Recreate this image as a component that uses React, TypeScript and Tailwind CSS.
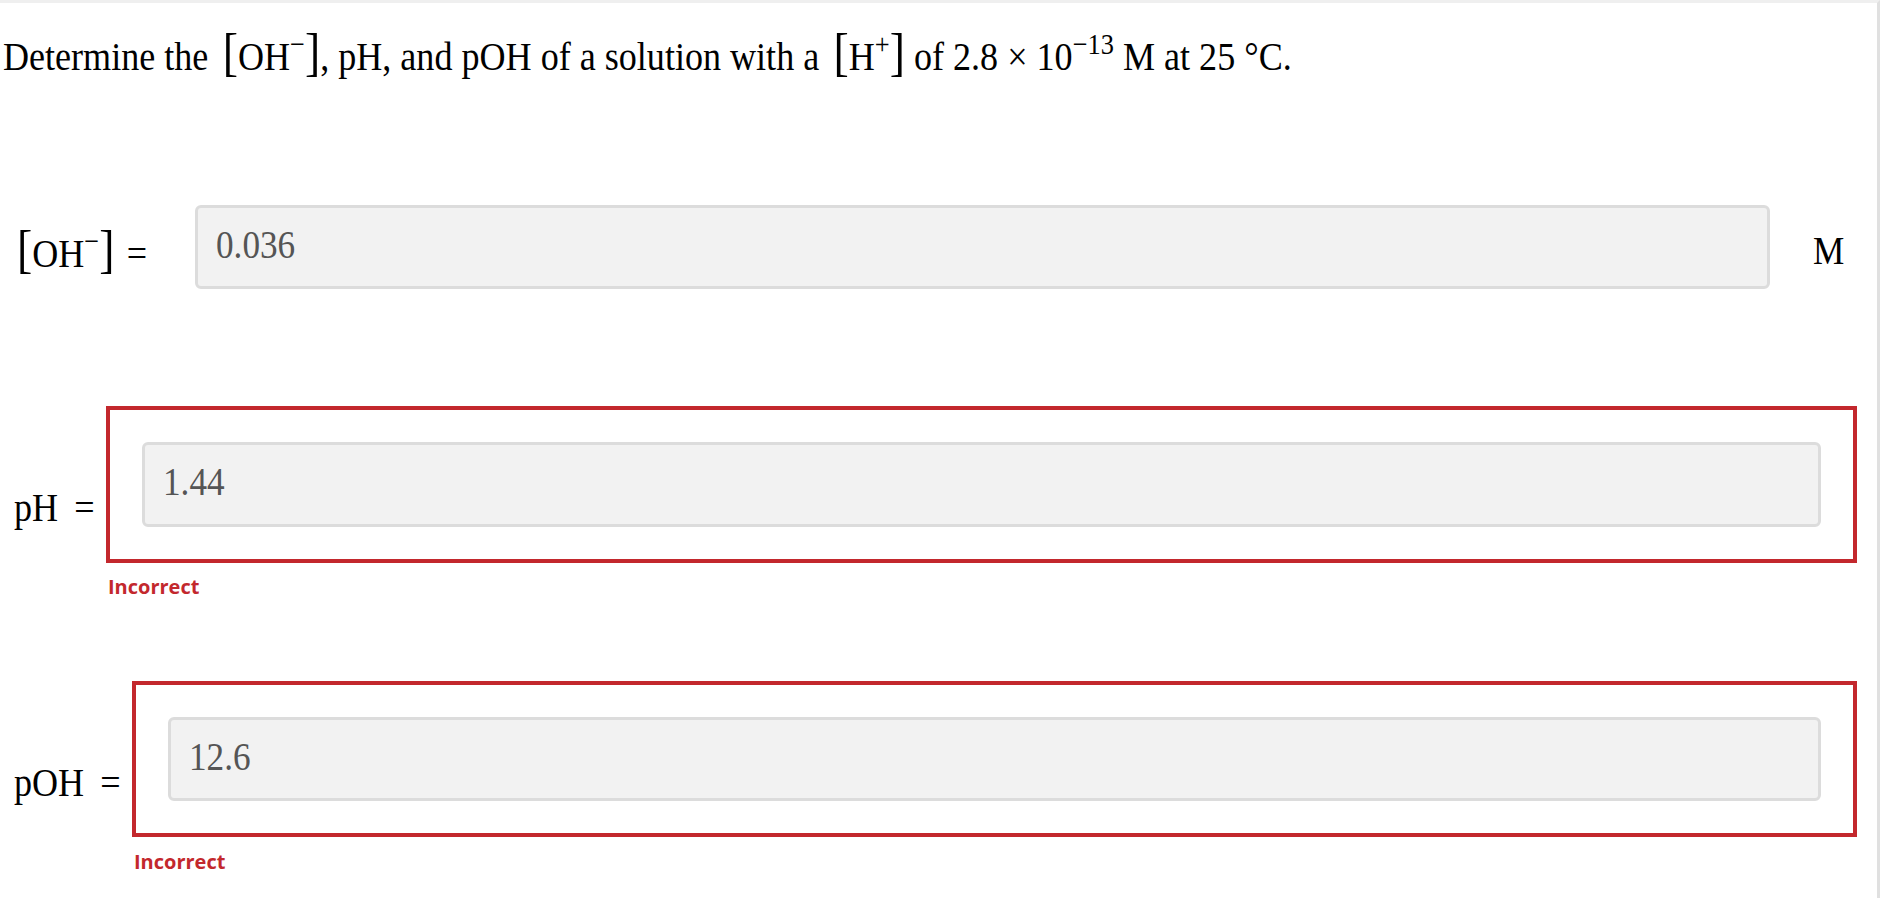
import React from 'react';

const serif = "font-['Liberation_Serif','Times_New_Roman',serif]";
const sans = "font-['Open_Sans','Liberation_Sans',sans-serif]";

// tall bracket, kept out of the line box height
const Br = ({ children }: { children: React.ReactNode }) => (
  <span className="text-[52px] leading-[0]">{children}</span>
);

// raised small glyphs (charge signs, exponents)
const Sup = ({ children }: { children: React.ReactNode }) => (
  <span className="relative -top-[16px] text-[30px] leading-[0]">{children}</span>
);

const Field = ({ value, height }: { value: string; height: string }) => (
  <div className={`flex-1 ${height} rounded-[6px] border-[3px] border-[#dcdcdc] bg-[#f2f2f2] pl-[18px] pt-[17px]`}>
    <div className={`${serif} origin-left scale-x-[0.88] whitespace-nowrap text-[40px] leading-[40px] text-[#555555]`}>
      {value}
    </div>
  </div>
);

const Incorrect = ({ indent, gap }: { indent: string; gap: string }) => (
  <div className={`${indent} ${gap} ${sans} text-[20px] leading-[20px] font-bold text-[#c3282d]`}>
    Incorrect
  </div>
);

export default function App() {
  return (
    <div className="min-h-screen w-full bg-white border-t-[3px] border-t-[#efefef] border-r-[3px] border-r-[#e0e0e0] text-black">
      {/* Question */}
      <div className="h-[73px] pt-[33px] pl-[3px]">
        <div className={`${serif} origin-left scale-x-[0.88] whitespace-nowrap text-[41px] leading-[40px]`}>
          Determine the <span className="ml-[6px]" />
          <Br>[</Br>OH<Sup>−</Sup><Br>]</Br>, pH, and pOH of a solution with a{' '}
          <span className="ml-[6px]" />
          <Br>[</Br>H<Sup>+</Sup><Br>]</Br> of 2.8 × 10<Sup>−13</Sup> M at 25 °C.
        </div>
      </div>

      {/* [OH-] row */}
      <div className="mt-[129px] flex h-[84px] items-stretch">
        <div className="w-[195px] shrink-0 pl-[17px] pt-[28px]">
          <div className={`${serif} origin-left scale-x-[0.88] whitespace-nowrap text-[41px] leading-[40px]`}>
            <Br>[</Br>OH<Sup>−</Sup><Br>]</Br>
            <span className="ml-[14px]">=</span>
          </div>
        </div>
        <Field value="0.036" height="h-[84px]" />
        <div className="w-[107px] shrink-0 pl-[43px] pt-[26px]">
          <div className={`${serif} origin-left scale-x-[0.88] text-[40px] leading-[40px]`}>M</div>
        </div>
      </div>

      {/* pH row */}
      <div className="mt-[117px] flex items-start">
        <div className="w-[106px] shrink-0 pl-[14px] pt-[81px]">
          <div className={`${serif} origin-left scale-x-[0.88] whitespace-nowrap text-[41px] leading-[40px]`}>
            pH <span className="ml-[8px]">=</span>
          </div>
        </div>
        <div className="mr-[20px] flex flex-1 border-[4px] border-[#c3282d] p-[32px]">
          <Field value="1.44" height="h-[85px]" />
        </div>
      </div>
      <Incorrect indent="ml-[108px]" gap="mt-[14px]" />

      {/* pOH row */}
      <div className="mt-[84px] flex items-start">
        <div className="w-[132px] shrink-0 pl-[14px] pt-[81px]">
          <div className={`${serif} origin-left scale-x-[0.88] whitespace-nowrap text-[41px] leading-[40px]`}>
            pOH <span className="ml-[8px]">=</span>
          </div>
        </div>
        <div className="mr-[20px] flex flex-1 border-[4px] border-[#c3282d] p-[32px]">
          <Field value="12.6" height="h-[84px]" />
        </div>
      </div>
      <Incorrect indent="ml-[134px]" gap="mt-[15px]" />
    </div>
  );
}
